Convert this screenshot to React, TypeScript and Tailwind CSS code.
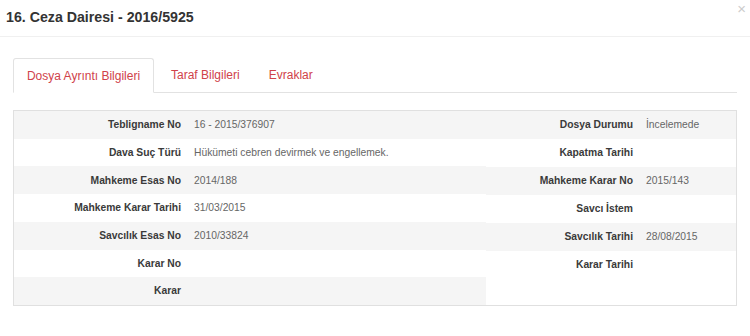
import React from "react";

type Row = { label: string; value?: string };

const leftRows: Row[] = [
  { label: "Tebligname No", value: "16 - 2015/376907" },
  { label: "Dava Suç Türü", value: "Hükümeti cebren devirmek ve engellemek." },
  { label: "Mahkeme Esas No", value: "2014/188" },
  { label: "Mahkeme Karar Tarihi", value: "31/03/2015" },
  { label: "Savcılık Esas No", value: "2010/33824" },
  { label: "Karar No" },
  { label: "Karar" },
];

const rightRows: Row[] = [
  { label: "Dosya Durumu", value: "İncelemede" },
  { label: "Kapatma Tarihi" },
  { label: "Mahkeme Karar No", value: "2015/143" },
  { label: "Savcı İstem" },
  { label: "Savcılık Tarihi", value: "28/08/2015" },
  { label: "Karar Tarihi" },
];

const InfoTable: React.FC<{ rows: Row[]; labelWidth: string; width: string }> = ({
  rows,
  labelWidth,
  width,
}) => {
  return (
    <div className={`${width} flex flex-col`}>
      {rows.map((r, i) => (
        <div
          key={r.label}
          className={`h-[28px] flex items-center ${i % 2 === 0 ? "bg-[#f5f5f5]" : "bg-white"}`}
        >
          <div className={`${labelWidth} text-right font-bold text-[#3a3a3a] pr-[7px]`}>
            {r.label}
          </div>
          <div className="pl-[6px] text-[#666]">{r.value}</div>
        </div>
      ))}
    </div>
  );
};

const App: React.FC = () => {
  return (
    <div className="w-[750px] h-[336px] bg-white overflow-hidden font-['Liberation_Sans',Arial,sans-serif] relative">
      <div className="h-[37px] border-b border-[#f0f0f0] flex items-center px-[6px]">
        <h1 className="text-[14.2px] font-bold text-[#333]">16. Ceza Dairesi - 2016/5925</h1>
      </div>
      <div className="absolute top-[1px] right-[4px] text-[#cccccc] text-[15px] leading-none">
        ×
      </div>
      <div className="px-[13px] pr-[13px]">
        <div className="mt-[21px] flex border-b border-[#e2e2e2] text-[12px] text-[#d0424a] h-[35px]">
          <div className="w-[141px] border border-[#e2e2e2] border-b-white -mb-px rounded-t-[3px] bg-white flex items-center justify-center">
            Dosya Ayrıntı Bilgileri
          </div>
          <div className="px-[17px] flex items-center">Taraf Bilgileri</div>
          <div className="px-[12px] flex items-center">Evraklar</div>
        </div>
        <div className="mt-[17px] h-[196px] border border-[#e0e0e0] flex text-[10.3px]">
          <InfoTable rows={leftRows} labelWidth="w-[174px]" width="w-[472px]" />
          <InfoTable rows={rightRows} labelWidth="w-[154px]" width="flex-1" />
        </div>
      </div>
    </div>
  );
};

export default App;
